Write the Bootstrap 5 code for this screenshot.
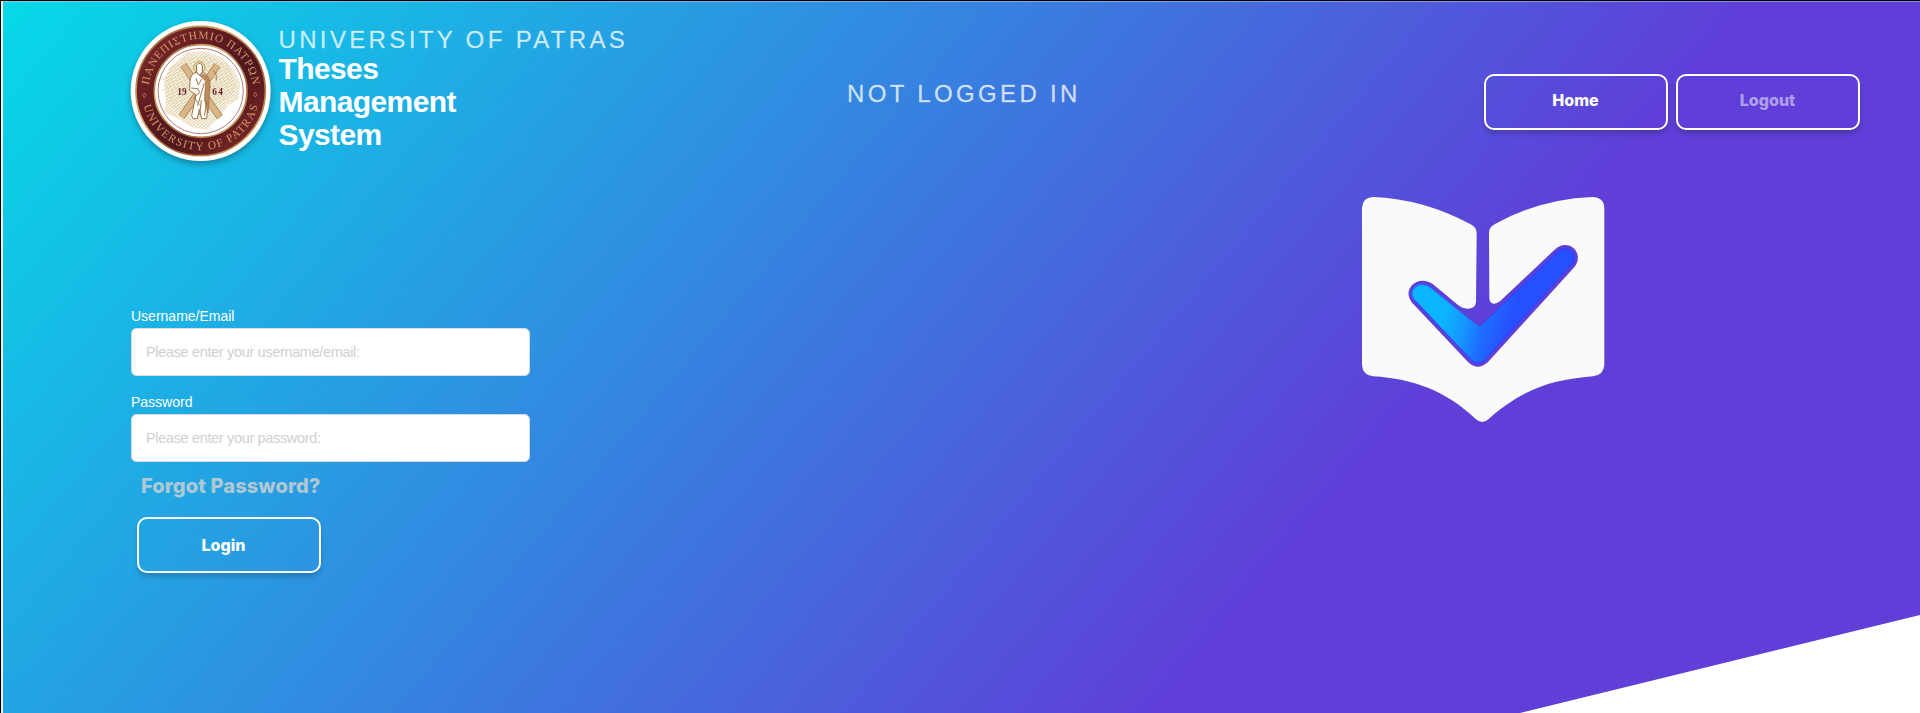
<!DOCTYPE html>
<html lang="en">
<head>
<meta charset="utf-8">
<title>Theses Management System</title>
<link href="https://cdn.jsdelivr.net/npm/bootstrap@5.3.0/dist/css/bootstrap.min.css" rel="stylesheet">
<style>
body{font-family:"Liberation Sans",Arial,sans-serif;background:#fff}
.page-shell{height:713px;border-left:1px solid #000;border-top:1px solid #000;padding:1px 0 0 2px;background:linear-gradient(90deg,#f1eff0 2px,#7fc9ea 2px,#8f85e0)}
.hero{height:711px;background:linear-gradient(130deg,#06d9e8 0%,#3584e0 38.5%,#5f3fd8 69.5%);color:#fff}
.hero-wedge{position:absolute;right:0;bottom:0;width:400px;height:98px;background:#fff;clip-path:polygon(0 100%,100% 0,100% 100%)}
.top-bar{height:178px;padding:18px 60px 0 127px}
.brand-area{width:717px;gap:6.5px}
.seal{width:142px;height:150px;filter:drop-shadow(0 3px 3px rgba(0,0,0,.3))}
.brand-text{padding-top:7px}
.caps-line{font-size:24px;line-height:26px;letter-spacing:3.35px;color:rgba(255,255,255,.75);-webkit-text-stroke:.3px rgba(255,255,255,.5);white-space:nowrap}
.brand-name{font-size:30px;line-height:33px;font-weight:700;letter-spacing:-.6px;width:200px;margin:-1px 0 0}
.status-line{padding-top:61px;flex:1}
.nav-actions{gap:8px;padding-top:54px}
.btn-frame{width:184px;height:56px;border:2px solid #fff;border-radius:10px;color:#fff;font:800 16px/20px Inter,sans-serif;padding:0 1px 4px 0;box-shadow:0 4px 5px rgba(0,0,0,.16)}
.btn-frame:disabled{color:rgba(255,255,255,.5);opacity:1;border-color:#fff}
.btn-submit{margin-left:6px;padding:0 11px 1px 0}
.login-form{width:527px;padding:128px 0 0 128px}
.field-label{font-size:14px;line-height:16px;margin:0 0 4px}
.field-box{height:48px;border:1px solid #d9d9d9;border-radius:5px;font-size:14.5px;letter-spacing:-.34px;padding:0 14px}
.field-gap{margin-bottom:18px}
.field-box::placeholder{color:#d0d0d0}
.forgot{font:800 20px/24px Inter,sans-serif;letter-spacing:.12px;color:#b0c7d4;text-decoration:none;margin:12px 0 19px 10px}
.book{width:290px;height:260px;margin:0 290px 0 0}
</style>
</head>
<body>
<div class="page-shell overflow-hidden">
<div class="hero position-relative">
<div class="hero-wedge"></div>
<header class="top-bar d-flex align-items-start">
  <div class="brand-area d-flex">
    <svg class="seal flex-shrink-0" viewBox="30 30 426 450" role="img" aria-label="University seal">
      <defs>
        <linearGradient id="gold" x2="1" y2="1"><stop stop-color="#8a5a32"/><stop offset=".35" stop-color="#d9a765"/><stop offset=".6" stop-color="#9b5f35"/><stop offset="1" stop-color="#e2b36d"/></linearGradient>
        <linearGradient id="wine" x2="1" y2="1"><stop stop-color="#842b2a"/><stop offset=".4" stop-color="#5c1a20"/><stop offset=".6" stop-color="#4f161d"/><stop offset="1" stop-color="#8a2d29"/></linearGradient>
        <path id="arcTop" d="M86 243A156 156 0 0 1 398 243"/>
        <path id="arcBottom" d="M65 243A177 177 0 0 0 419 243"/>
        <pattern id="hatch" width="7" height="9" patternUnits="userSpaceOnUse" patternTransform="rotate(50)"><path d="M1 0V9M4 2V7" stroke="#c9ab62" stroke-width="1.5"/></pattern>
        <pattern id="hatch2" width="10" height="12" patternUnits="userSpaceOnUse" patternTransform="rotate(66)"><path d="M2 0V8" stroke="#c9ab62" stroke-width="1.8"/></pattern>
      </defs>
      <circle cx="242" cy="243" r="210" fill="#fff"/>
      <circle cx="242" cy="243" r="194" fill="url(#wine)" stroke="url(#gold)" stroke-width="5"/>
      <circle cx="242" cy="243" r="139" fill="#fff" stroke="url(#gold)" stroke-width="5"/>
      <circle cx="242" cy="243" r="128" fill="none" stroke="#8f3c32" stroke-width="2"/>
      <g font-family="Liberation Serif,serif" font-size="34" fill="#cf9b68">
        <text textLength="454" lengthAdjust="spacing"><textPath href="#arcTop" startOffset="18">ΠΑΝΕΠΙΣΤΗΜΙΟ ΠΑΤΡΩΝ</textPath></text>
        <text textLength="466" lengthAdjust="spacing"><textPath href="#arcBottom" startOffset="45">UNIVERSITY OF PATRAS</textPath></text>
      </g>
      <path d="M73 249l5 7-5 7-5-7zM406 247l5 7-5 7-5-7z" fill="none" stroke="#cf9b68" stroke-width="2"/>
      <path d="M132 205l22-38 26-22 20-18 52-3 55 18 33 35 20 42-4 50-30 15-25 35-40 40-48-8-30-20-50-25 5-40z" fill="url(#hatch)"/>
      <path d="M125 238l20-60 50-35 70-8 62 35 25 66-35 35-55 36-80 3-38-35z" fill="url(#hatch2)"/>
      <path d="M190 165L300 322M292 166L185 320" stroke="#a87943" stroke-width="21"/>
      <path d="M190 165L300 322M292 166L185 320" stroke="#d8b688" stroke-width="17"/>
      <circle cx="238" cy="172" r="17" fill="#eee0ba" stroke="#b69655" stroke-width="3"/>
      <path d="M225 188q-14 7-15 25l-1 29 19 12-13 63 4 9h13l6-28 7 28h15l6-75q12-43-12-62z" fill="#fff" stroke="#9f7443" stroke-width="3"/>
      <path d="M254 194q20 5 15 55l-5 60-11-40 4-55-19-19z" fill="#bb8c59" stroke="#976b3c" stroke-width="2"/>
      <path d="M229 166q9-12 18 0v20q-9 16-17 0z" fill="#fff" stroke="#916638" stroke-width="3"/>
      <path d="M228 205l7 20 10-18M214 234l20 2 5 12-17 14 16 22M253 219l-20 68M244 270l-5 45M261 272l-8 45M280 180l8 12 1 18" fill="none" stroke="#9f7443" stroke-width="3"/>
      <g font-family="Liberation Serif,serif" font-size="28" font-weight="700" fill="#671e25"><text x="172" y="254">19</text><text x="277" y="254" textLength="32">64</text></g>
    </svg>
    <div class="brand-text"><div class="caps-line">UNIVERSITY OF PATRAS</div><h1 class="brand-name">Theses Management System</h1></div>
  </div>
  <div class="status-line caps-line">NOT LOGGED IN</div>
  <nav class="nav-actions d-flex">
    <button class="btn btn-frame">Home</button>
    <button class="btn btn-frame" disabled>Logout</button>
  </nav>
</header>
<main class="d-flex justify-content-between align-items-start">
  <form class="login-form d-flex flex-column align-items-start">
    <label class="field-label" for="user">Username/Email</label>
    <input id="user" class="form-control field-box field-gap" placeholder="Please enter your username/email:">
    <label class="field-label" for="pass">Password</label>
    <input id="pass" type="password" class="form-control field-box" placeholder="Please enter your password:">
    <a class="forgot" href="#">Forgot Password?</a>
    <button type="button" class="btn btn-frame btn-submit">Login</button>
  </form>
  <svg class="book" viewBox="0 0 870 780" role="img" aria-label="Open book with a check mark">
    <defs><linearGradient id="tick" gradientUnits="userSpaceOnUse" x1="310" y1="400" x2="505" y2="455"><stop stop-color="#0cb5ff"/><stop offset=".35" stop-color="#1596ff"/><stop offset=".65" stop-color="#1f6bff"/><stop offset="1" stop-color="#2650ff"/></linearGradient></defs>
    <path fill="#fafafa" d="M66 84Q67 53 98 51Q252 57 392 133Q410 142 410 160L408 365Q407 386 382 386Q367 386 355 376L430 500L480 364Q469 372 460 371Q448 369 448 354L447 158Q447 141 465 132Q600 57 757 51Q792 52 793 84V555Q791 585 759 589C635 599 548 627 447 716Q427 735 407 717C318 633 222 597 99 589Q68 586 66 555Z"/>
    <path fill="#5d40d8" d="M217 369C190 337 215 302 248 302Q265 302 279 313L355 376L418 420L480 364L643 210Q659 195 675 195C708 195 726 232 704 260L444 546Q413 575 384 546Z"/>
    <path fill="url(#tick)" stroke="#183cff" stroke-width="2" d="M225 361C206 337 222 314 247 314Q259 314 270 322L417 442L652 217Q664 207 676 207C700 208 711 234 694 253L436 538Q415 561 392 538Z"/>
    <path fill="none" stroke="#1691ff" stroke-width="3" d="M225 361C206 337 222 314 247 314Q259 314 270 322L417 442"/>
  </svg>
</main>
</div>
</div>
<script src="https://cdn.jsdelivr.net/npm/bootstrap@5.3.0/dist/js/bootstrap.bundle.min.js"></script>
</body>
</html>
